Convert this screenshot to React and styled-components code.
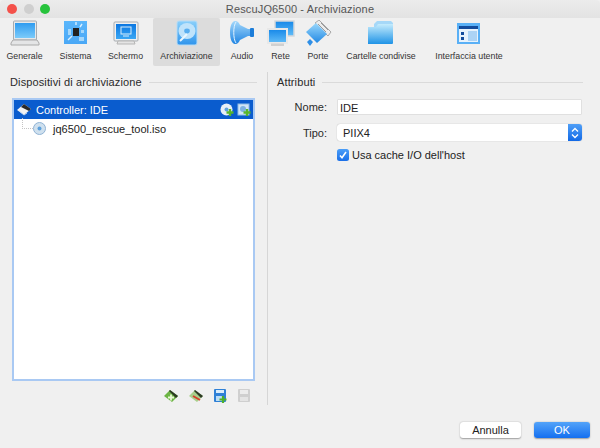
import styled, { createGlobalStyle } from 'styled-components'

const Global = createGlobalStyle`
    html, body {
        margin: 0;
        padding: 0;
        background: #f0f0f0;
    }
    * {
        box-sizing: border-box;
    }
`
const Window = styled.div`
    width: 600px;
    height: 448px;
    display: flex;
    flex-direction: column;
    overflow: hidden;
    background: #f0f0f0;
    color: #222;
    font-family: "Liberation Sans", Arial, sans-serif;
`
const TitleBar = styled.div`
    height: 18px;
    flex: none;
    display: grid;
    grid-template-columns: 1fr auto 1fr;
    align-items: center;
    background: linear-gradient(#ececec, #e3e3e3);
    border-radius: 4px 4px 0 0;
`
const Lights = styled.div`
    display: flex;
    gap: 6.5px;
    padding-left: 7px;
`
const Light = styled.span`
    width: 10px;
    height: 10px;
    border-radius: 50%;
    background: ${p => p.color};
`
const Title = styled.div`
    font-size: 11px;
    color: #555;
    letter-spacing: .15px;
`
const Toolbar = styled.div`
    height: 48px;
    flex: none;
    display: flex;
    gap: 4px;
`
const Tab = styled.div`
    width: ${p => p.$w}px;
    flex: none;
    display: flex;
    flex-direction: column;
    align-items: center;
    padding-top: 2px;
    background: ${p => (p.$active ? '#dcdcdc' : 'transparent')};
    border-radius: 2px;
`
const TabIcon = styled.div`
    width: 0;
    height: 26px;
    display: flex;
    justify-content: center;
`
const TabLabel = styled.span`
    margin-top: 5px;
    font-size: 8.8px;
    line-height: 11px;
    white-space: nowrap;
    color: #333;
`
const Body = styled.div`
    flex: 1;
    display: flex;
    padding: 6px 17px 0 10px;
`
const LeftPane = styled.div`
    width: 247px;
    flex: none;
    display: flex;
    flex-direction: column;
`
const Rule = styled.div`
    width: 1px;
    height: 333px;
    flex: none;
    margin: 0 9px 0 10px;
    background: #d6d6d6;
`
const RightPane = styled.div`
    flex: 1;
    display: flex;
    flex-direction: column;
`
const GroupHead = styled.div`
    display: flex;
    align-items: center;
    gap: 7px;
    height: 20px;
    font-size: 11px;
    letter-spacing: .12px;
    color: #2a2a2a;
    white-space: nowrap;
    &::after {
        content: '';
        flex: 1;
        height: 1px;
        margin-top: 1px;
        background: #dadada;
    }
`
const Tree = styled.div`
    width: 243px;
    height: 283px;
    margin: 6px 0 0 2px;
    background: #fff;
    border: 2px solid #a9c9f3;
`
const HeaderRow = styled.div`
    height: 19px;
    display: flex;
    align-items: center;
    padding: 0 2px;
    background: #0a5cce;
    color: #fff;
    font-size: 11px;
`
const HeaderText = styled.span`
    flex: 1;
    margin-left: 4px;
`
const HeaderIcons = styled.span`
    display: flex;
    gap: 3px;
`
const ChildRow = styled.div`
    display: flex;
    align-items: center;
    height: 20px;
    font-size: 11px;
    color: #222;
`
const TreeLine = styled.span`
    width: 11px;
    height: 11px;
    margin: 0 0 9px 8px;
    border-left: 1px dotted #c4c4c4;
    border-bottom: 1px dotted #c4c4c4;
    transform: translateY(-1px);
`
const ChildText = styled.span`
    margin-left: 6px;
`
const TreeActions = styled.div`
    display: flex;
    gap: 9px;
    padding: 8px 6px 0 0;
    justify-content: flex-end;
`
const FormGrid = styled.div`
    display: grid;
    grid-template-columns: 50px 245px;
    column-gap: 10px;
    row-gap: 9px;
    align-items: center;
    margin-top: 7px;
`
const FieldLabel = styled.label`
    font-size: 11px;
    text-align: right;
    color: #2a2a2a;
`
const TextField = styled.div`
    height: 16px;
    padding-left: 2px;
    font-size: 11px;
    line-height: 16px;
    background: #fff;
    border: 1px solid #e0e0e0;
    border-radius: 1px;
`
const Select = styled.div`
    height: 17px;
    display: flex;
    align-items: center;
    justify-content: space-between;
    padding-left: 6px;
    font-size: 11px;
    background: #fff;
    border-radius: 3px;
    box-shadow: 0 0 1px rgba(0, 0, 0, .35);
    overflow: hidden;
`
const SelectArrows = styled.span`
    width: 14px;
    height: 100%;
    display: flex;
    align-items: center;
    justify-content: center;
    background: linear-gradient(#4f9ff7, #1269e6);
`
const CheckRow = styled.div`
    grid-column: 2;
    display: flex;
    align-items: center;
    gap: 3px;
    margin-top: -1px;
    font-size: 11px;
`
const CheckBox = styled.span`
    width: 12px;
    height: 12px;
    display: flex;
    align-items: center;
    justify-content: center;
    border-radius: 2.5px;
    background: linear-gradient(#4b9ef8, #1a6fe8);
`
const Footer = styled.div`
    flex: none;
    display: flex;
    justify-content: flex-end;
    gap: 13px;
    padding: 0 10px 10px 0;
`
const Button = styled.div`
    width: ${p => p.$w}px;
    height: 16px;
    display: flex;
    align-items: center;
    justify-content: center;
    font-size: 11px;
    border-radius: 3px;
    color: ${p => (p.$primary ? '#fff' : '#222')};
    background: ${p => (p.$primary ? 'linear-gradient(#53a3f9, #146ff0)' : '#fff')};
    box-shadow: 0 0.5px 1.5px rgba(0, 0, 0, .35);
`

const Grad = ({ id, a = '#8fd0fb', b = '#1b7fe0' }) => (
    <defs>
        <linearGradient id={id} x1="0" y1="0" x2="0" y2="1">
            <stop offset="0" stopColor={a} />
            <stop offset="1" stopColor={b} />
        </linearGradient>
    </defs>
)

const IconBox = ({ children }) => (
    <svg width="30" height="26" viewBox="0 0 30 26" style={{ display: 'block', flex: 'none' }}>{children}</svg>
)

const Laptop = () => (
    <IconBox>
        <Grad id="lap" a="#2f9cf0" b="#7ccbfa" />
        <rect x="3.5" y="1" width="23" height="19" rx="1" fill="#e6e8ea" stroke="#a6abb0" />
        <rect x="5" y="3" width="20" height="15" fill="url(#lap)" />
        <path d="M3 20h24l2 3v2H1v-2z" fill="#e4e5e6" stroke="#aaaaaa" />
    </IconBox>
)
const Chip = () => (
    <IconBox>
        <Grad id="sys" a="#5ab6fb" b="#4aa8f6" />
        <rect x="3" y="1" width="23" height="23" fill="url(#sys)" />
        <rect x="12" y="8" width="6" height="8" fill="#222" />
        <g stroke="#d9efff" strokeWidth="1.4" fill="none">
            <path d="M15 2v3M21 4l-2 3M7 20l4-4" />
        </g>
        <rect x="18" y="17" width="5" height="4" fill="#a5d7fb" />
        <rect x="7" y="9" width="3" height="6" fill="#a5d7fb" />
        <rect x="20" y="10" width="3" height="3" fill="#a5d7fb" />
    </IconBox>
)
const Monitor = () => (
    <IconBox>
        <Grad id="scr" a="#0b77e2" b="#3aa7f4" />
        <rect x="3" y="2" width="24" height="19" rx="1" fill="#eef0f2" stroke="#a7abaf" />
        <rect x="5" y="4" width="20" height="15" fill="url(#scr)" />
        <rect x="10" y="7" width="10" height="7" fill="none" stroke="#d8eefc" />
        <path d="M12 16h6" stroke="#d8eefc" />
        <path d="M7 21h16l1 3H6z" fill="#e4e4e4" stroke="#b5b5b5" />
    </IconBox>
)
const Disk = () => (
    <IconBox>
        <Grad id="dsk" a="#8ad0fb" b="#2f94ec" />
        <rect x="5" y="1" width="20" height="24" rx="2" fill="url(#dsk)" stroke="#b6dcf7" />
        <ellipse cx="15" cy="11" rx="8.5" ry="8" fill="#bfe3fb" />
        <ellipse cx="15" cy="11" rx="2.8" ry="2.4" fill="#58aef0" />
        <path d="M8 21l7-7" stroke="#eaf7ff" strokeWidth="2" />
    </IconBox>
)
const Speaker = () => (
    <IconBox>
        <Grad id="aud" a="#a4d8fb" b="#1f84e2" />
        <path d="M8 1c3 0 4 2 5 4l8 4h5v7h-5l-8 4c-1 2-2 4-5 4-3 0-5-5-5-11.500S5 1 8 1z" fill="url(#aud)" />
        <path d="M9 2c-3 4-3 17 0 21" stroke="#e2f3ff" fill="none" />
        <rect x="23" y="8" width="4" height="9" rx="1" fill="#1c7dd9" />
    </IconBox>
)
const Network = () => (
    <IconBox>
        <Grad id="net" a="#1587e8" b="#62bdf8" />
        <rect x="9" y="1" width="19" height="15" fill="url(#net)" stroke="#d4d8dc" strokeWidth="1.5" />
        <rect x="2" y="9" width="19" height="14" fill="url(#net)" stroke="#e8e8e8" strokeWidth="2" />
        <rect x="5" y="23.500" width="13" height="2.500" fill="#d0d0d0" />
    </IconBox>
)
const Port = () => (
    <IconBox>
        <Grad id="prt" a="#9ad8fc" b="#2289e4" />
        <path d="M16 0l12 12-3 4L12 3z" fill="#ececec" stroke="#a8a8a8" />
        <path d="M18 3l7 7M15 4l8 8" stroke="#9a9a9a" />
        <path d="M13 3l11 11-10 9L3 12z" fill="url(#prt)" />
        <path d="M7 19l-3 3 3 4 3-4z" fill="#2f8fe6" />
    </IconBox>
)
const Folder = () => (
    <IconBox>
        <Grad id="fld" a="#c5ecfd" b="#1f93e6" />
        <path d="M8 4l3-3h14l2 2v19H8z" fill="#a6d8f8" />
        <path d="M2 7h8l2-3h15v19a1 1 0 0 1-1 1H2z" fill="url(#fld)" />
    </IconBox>
)
const Prefs = () => (
    <IconBox>
        <Grad id="prf" a="#59b0f6" b="#59b0f6" />
        <rect x="3" y="3" width="23" height="21" fill="url(#prf)" />
        <rect x="5" y="6" width="19" height="16" fill="#e7f2fc" />
        <rect x="5" y="6" width="19" height="3" fill="#124b9c" />
        <rect x="14" y="11" width="9" height="10" fill="#acd3f5" />
        <rect x="7" y="12" width="3" height="3" fill="#124b9c" />
        <rect x="7" y="17" width="3" height="3" fill="#124b9c" />
    </IconBox>
)

const ControllerGlyph = () => (
    <svg width="16" height="13" viewBox="0 0 16 13">
        <path d="M1 7l7-6 7 5-7 6z" fill="#f2f2f2" />
        <path d="M5 4l3-3 7 5-2 2z" fill="#2a2a2a" />
        <path d="M3 8l5 4 3-2" stroke="#b9d4f2" fill="none" />
    </svg>
)
const AddDisc = ({ light }) => (
    <svg width="14" height="14" viewBox="0 0 14 14">
        <circle cx="6.5" cy="6.5" r="6" fill={light ? '#cfe0ee' : '#e6eef5'} stroke={light ? '#8fb2d4' : 'none'} />
        <circle cx="6.5" cy="6.5" r="2" fill="#5da0dc" />
        {!light && <path d="M10 6v7M6.500 9.500h7" stroke="#57b52c" strokeWidth="2.400" />}
    </svg>
)
const AddHdd = () => (
    <svg width="14" height="14" viewBox="0 0 14 14">
        <rect x="1" y="1" width="11" height="11" fill="#d2e6f7" stroke="#8fbbe3" />
        <circle cx="6" cy="6" r="3" fill="#7fb3e0" />
        <path d="M10 6v7M6.500 9.500h7" stroke="#57b52c" strokeWidth="2.400" />
    </svg>
)
const DriveAdd = () => (
    <svg width="16" height="14" viewBox="0 0 16 14">
        <path d="M1 7l6-6 8 6-6 6z" fill="#6cb545" />
        <path d="M6 2l1-1 8 6-2 2z" fill="#2c3a24" />
        <path d="M8 5.500v6M5 8.500h6" stroke="#e9f8d6" strokeWidth="1.800" />
    </svg>
)
const DriveRemove = () => (
    <svg width="16" height="14" viewBox="0 0 16 14">
        <path d="M1 7l6-6 8 6-6 6z" fill="#a9cf8c" />
        <path d="M6 2l1-1 8 6-2 2z" fill="#2c3a24" />
        <path d="M5 7l7 4" stroke="#d8402a" strokeWidth="2" fill="none" />
    </svg>
)
const FloppyAdd = () => (
    <svg width="15" height="14" viewBox="0 0 15 14">
        <rect x="1" y="0" width="12" height="13" rx="1" fill="#2f80d6" />
        <rect x="3" y="1" width="8" height="3" fill="#d9ecfb" />
        <rect x="3" y="7" width="8" height="5" fill="#bcdcf5" />
        <path d="M10 7v7M6.500 10.500h7" stroke="#4eb02a" strokeWidth="2.200" />
    </svg>
)
const FloppyOff = () => (
    <svg width="14" height="14" viewBox="0 0 14 14">
        <rect x="1" y="0" width="12" height="13" rx="1" fill="#cfcfcf" />
        <rect x="3" y="1" width="8" height="4" fill="#ececec" />
        <rect x="3" y="8" width="8" height="4" fill="#e4e4e4" />
    </svg>
)

const tabs = [
    { name: 'Generale', Icon: Laptop, w: 49 },
    { name: 'Sistema', Icon: Chip, w: 45 },
    { name: 'Schermo', Icon: Monitor, w: 47 },
    { name: 'Archiviazione', Icon: Disk, w: 67, active: true },
    { name: 'Audio', Icon: Speaker, w: 36 },
    { name: 'Rete', Icon: Network, w: 33 },
    { name: 'Porte', Icon: Port, w: 34 },
    { name: 'Cartelle condivise', Icon: Folder, w: 84 },
    { name: 'Interfaccia utente', Icon: Prefs, w: 84 },
]

function App() {
    return (
        <Window>
            <Global />
            <TitleBar>
                <Lights>
                    <Light color="#f4514a" />
                    <Light color="#cfcfcf" />
                    <Light color="#27c33c" />
                </Lights>
                <Title>RescuJQ6500 - Archiviazione</Title>
            </TitleBar>
            <Toolbar>
                {tabs.map(({ name, Icon, w, active }) => (
                    <Tab key={name} $w={w} $active={active}>
                        <TabIcon><Icon /></TabIcon>
                        <TabLabel>{name}</TabLabel>
                    </Tab>
                ))}
            </Toolbar>
            <Body>
                <LeftPane>
                    <GroupHead>Dispositivi di archiviazione</GroupHead>
                    <Tree>
                        <HeaderRow>
                            <ControllerGlyph />
                            <HeaderText>Controller: IDE</HeaderText>
                            <HeaderIcons>
                                <AddDisc />
                                <AddHdd />
                            </HeaderIcons>
                        </HeaderRow>
                        <ChildRow>
                            <TreeLine />
                            <AddDisc light />
                            <ChildText>jq6500_rescue_tool.iso</ChildText>
                        </ChildRow>
                    </Tree>
                    <TreeActions>
                        <DriveAdd />
                        <DriveRemove />
                        <FloppyAdd />
                        <FloppyOff />
                    </TreeActions>
                </LeftPane>
                <Rule />
                <RightPane>
                    <GroupHead>Attributi</GroupHead>
                    <FormGrid>
                        <FieldLabel>Nome:</FieldLabel>
                        <TextField>IDE</TextField>
                        <FieldLabel>Tipo:</FieldLabel>
                        <Select>
                            PIIX4
                            <SelectArrows>
                                <svg width="8" height="12" viewBox="0 0 8 12">
                                    <path d="M1 4.500L4 1.500l3 3M1 7.500l3 3 3-3" stroke="#fff" strokeWidth="1.300" fill="none" />
                                </svg>
                            </SelectArrows>
                        </Select>
                        <CheckRow>
                            <CheckBox>
                                <svg width="10" height="10" viewBox="0 0 10 10">
                                    <path d="M2 5.500l2 2.200L8 2" stroke="#fff" strokeWidth="1.600" fill="none" />
                                </svg>
                            </CheckBox>
                            Usa cache I/O dell'host
                        </CheckRow>
                    </FormGrid>
                </RightPane>
            </Body>
            <Footer>
                <Button $w={61}>Annulla</Button>
                <Button $w={56} $primary>OK</Button>
            </Footer>
        </Window>
    )
}

export default App
